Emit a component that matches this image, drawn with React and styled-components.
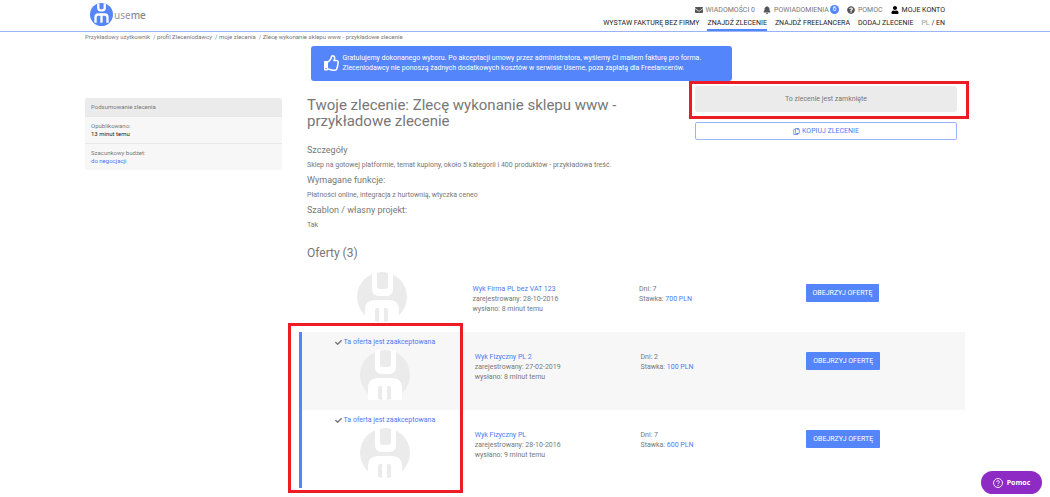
import React from 'react';
import styled, { createGlobalStyle } from 'styled-components';
import {
  FaEnvelope,
  FaBell,
  FaQuestionCircle,
  FaUser,
  FaRegCopy,
  FaCheck,
  FaRegThumbsUp,
} from 'react-icons/fa';

const blue = '#5585fb';
const linkBlue = '#4d79f6';
const grey = '#777';

const GlobalStyle = createGlobalStyle`
  * {
    box-sizing: border-box;
  }

  body {
    margin: 0;
    background: #fff;
    color: ${grey};
    font-family: Roboto, sans-serif;
    font-size: 7px;
    line-height: 10px;
  }

  h1, h2, h3, p, ul, ol, dl, dd {
    margin: 0;
    padding: 0;
    font-weight: 400;
  }

  a {
    color: inherit;
    text-decoration: none;
  }

  button {
    font-family: inherit;
    cursor: pointer;
  }
`;

const Container = styled.div`
  max-width: 880px;
  margin: 0 auto;
`;

const Header = styled.header`
  border-bottom: 1px solid #9ab4f8;
`;

const HeaderInner = styled(Container)`
  display: flex;
  justify-content: space-between;
  height: 31px;
  padding: 0 20px 0 5px;
`;

const Brand = styled.a`
  display: flex;
  align-items: center;
  gap: 1px;
  height: 29px;
  color: #999;
  font-family: 'Noto Sans', sans-serif;
  font-size: 10px;

  b {
    font-weight: 500;
    color: #888;
  }
`;

const Navs = styled.div`
  display: flex;
  flex-direction: column;
  justify-content: space-between;
  align-items: flex-end;
  padding-top: 4px;
`;

const Nav = styled.nav`
  display: flex;
  gap: 8px;
`;

const NavLink = styled.a`
  display: flex;
  align-items: center;
  gap: 3px;
  height: 11px;
  color: ${(props) => (props.$dark ? '#222' : grey)};
  text-transform: uppercase;

  svg {
    width: 8px;
    height: 8px;
    color: ${(props) => (props.$dark ? '#000' : '#555')};
  }
`;

const MenuLink = styled.a`
  height: 13px;
  color: #222;
  text-transform: uppercase;
  border-bottom: 2px solid ${(props) => (props.$active ? blue : 'transparent')};
`;

const Languages = styled.div`
  color: #222;

  a:first-child {
    color: #999;
  }
`;

const Badge = styled.span`
  width: 9px;
  height: 9px;
  margin-left: -2px;
  border-radius: 50%;
  background: ${blue};
  color: #fff;
  line-height: 9px;
  text-align: center;
`;

const Breadcrumbs = styled.nav`
  display: flex;
  gap: 3px;
  font-size: 6px;
`;

const AlertArea = styled.div`
  padding: 4px 8px 0 0;
`;

const Alert = styled.div`
  display: flex;
  align-items: center;
  gap: 3px;
  width: 421px;
  max-width: 100%;
  margin: 0 auto;
  padding: 7px 13px 8px;
  border-radius: 3px;
  background: ${blue};
  color: #fff;

  svg {
    flex: none;
    width: 16px;
    height: 16px;
  }
`;

const Layout = styled.div`
  display: grid;
  grid-template-columns: 197px 1fr;
  gap: 17px;
  padding-bottom: 8px;
`;

const Summary = styled.aside`
  align-self: start;
  margin-top: 17px;
  border-radius: 3px;
  background: #f7f7f7;
  font-size: 6px;
  line-height: 8px;
`;

const SummaryTitle = styled.h2`
  padding: 5px 6px;
  border-radius: 3px 3px 0 0;
  background: #ebebeb;
  font-size: 6px;
`;

const SummaryItem = styled.div`
  padding: 5px 6px;
  border-top: 1px solid #e8e8e8;
`;

const SummaryValue = styled.dd`
  color: ${(props) => (props.$link ? linkBlue : '#222')};
`;

const Intro = styled.div`
  display: flex;
  align-items: flex-start;
  justify-content: space-between;
  padding: 0 8px;
`;

const Details = styled.section`
  width: 320px;
  padding-top: 16px;
`;

const Title = styled.h1`
  margin-bottom: 15px;
  font-size: 15px;
  line-height: 16px;
`;

const Subtitle = styled.h3`
  font-size: 9px;
  line-height: 12px;
`;

const Text = styled.p`
  padding: 4px 0;
`;

const Actions = styled.div`
  display: flex;
  flex-direction: column;
  gap: 10px;
  width: 262px;
  padding-top: 5px;
`;

const Marked = styled.div`
  position: relative;
`;

const Mark = styled.div`
  position: absolute;
  border: 3px solid #ed1c24;
  pointer-events: none;
`;

const StatusMark = styled(Mark)`
  inset: -5px -12px -7px -6px;
`;

const OffersMark = styled(Mark)`
  inset: -9px auto -5px -11px;
  width: 175px;
`;

const Closed = styled.div`
  padding: 7px;
  border-radius: 3px;
  background: #ebebeb;
  line-height: 12px;
  text-align: center;
`;

const CopyButton = styled.button`
  display: flex;
  align-items: center;
  justify-content: center;
  gap: 2px;
  height: 18px;
  padding: 0;
  border: 1px solid #9ab4f8;
  border-radius: 2px;
  background: #fff;
  color: ${linkBlue};
  font-size: 7px;
  text-transform: uppercase;
`;

const OffersTitle = styled.h2`
  padding: 11px 8px 3px;
  font-size: 12px;
  line-height: 16px;
`;

const Offer = styled.article`
  display: grid;
  grid-template-columns: repeat(4, 1fr);
  height: ${(props) => (props.$accepted ? '78px' : '68px')};
  border-left: ${(props) => (props.$accepted ? `3px solid ${blue}` : 'none')};
  background: ${(props) => (props.$shaded ? '#f7f7f7' : 'transparent')};
`;

const OfferPhoto = styled.div`
  display: flex;
  flex-direction: column;
  align-items: center;
  justify-content: flex-end;
  gap: 3px;
  padding-bottom: 10px;
`;

const Accepted = styled.span`
  display: flex;
  align-items: center;
  gap: 2px;
  color: ${linkBlue};

  svg {
    width: 7px;
    height: 7px;
    color: ${grey};
  }
`;

const OfferCell = styled.div`
  padding: 20px 7px 0;
`;

const Link = styled.a`
  color: ${linkBlue};
`;

const OfferButton = styled.button`
  height: 18px;
  padding: 0 7px;
  border: 0;
  border-radius: 1px;
  background: ${blue};
  color: #fff;
  font-size: 7px;
  text-transform: uppercase;
`;

const HelpButton = styled.button`
  position: fixed;
  right: 8px;
  bottom: 3px;
  display: flex;
  align-items: center;
  justify-content: center;
  gap: 4px;
  width: 61px;
  height: 23px;
  padding: 0;
  border: 0;
  border-radius: 12px;
  background: #8e2bc4;
  color: #fff;
  font-family: 'Open Sans', sans-serif;
  font-size: 7px;
  font-weight: 700;
`;

const offers = [
  { name: 'Wyk Firma PL bez VAT 123', registered: '28-10-2016', sent: '8 minut temu', days: 7, rate: '700 PLN' },
  { name: 'Wyk Fizyczny PL 2', registered: '27-02-2019', sent: '8 minut temu', days: 2, rate: '100 PLN', accepted: true, shaded: true },
  { name: 'Wyk Fizyczny PL', registered: '28-10-2016', sent: '9 minut temu', days: 7, rate: '600 PLN', accepted: true },
];

const Logo = () => (
  <svg width="23" height="23" viewBox="0 0 50 50" aria-hidden="true">
    <circle cx="25" cy="25" r="25" fill={blue} />
    <g fill="none" stroke="#fff" strokeWidth="5">
      <path d="M18 1V11Q18 16 23 16H27Q32 16 32 11V1" />
      <path d="M12 43V31Q12 25 18 25H32Q38 25 38 31V43M25 25V43" />
    </g>
  </svg>
);

const Avatar = () => (
  <svg width="50" height="50" viewBox="0 0 50 50" aria-hidden="true">
    <circle cx="25" cy="25" r="25" fill="#ebebeb" />
    <path d="M15 0V17Q15 24 22 24H29Q36 24 36 17V0Z" fill="#fff" />
    <path d="M20 1V14Q20 17 23 17H28Q31 17 31 14V1Q25 -1 20 1Z" fill="#ebebeb" />
    <path d="M8 50V38Q8 28 18 28H32Q42 28 42 38V50Z" fill="#fff" />
    <path d="M18 49V38Q18 36 20 36H22V50ZM27 50V36H29Q31 36 31 38V49Z" fill="#ebebeb" />
  </svg>
);

const HelpIcon = () => (
  <svg width="10" height="10" viewBox="0 0 20 20" fill="none" stroke="#fff" strokeWidth="1.8">
    <circle cx="10" cy="10" r="9" />
    <path d="M7.3 8a2.7 2.7 0 1 1 4 2.4c-.9.5-1.3.9-1.3 1.9" />
    <path d="M10 13.8v1.8" />
  </svg>
);

const OfferRow = ({ offer }) => (
  <Offer $accepted={offer.accepted} $shaded={offer.shaded}>
    <OfferPhoto>
      {offer.accepted && (
        <Accepted>
          <FaCheck />
          Ta oferta jest zaakceptowana
        </Accepted>
      )}
      <Avatar />
    </OfferPhoto>
    <OfferCell>
      <Link href="#">{offer.name}</Link>
      <p>zarejestrowany: {offer.registered}</p>
      <p>wysłano: {offer.sent}</p>
    </OfferCell>
    <OfferCell>
      <p>Dni: {offer.days}</p>
      <p>
        Stawka: <Link as="span">{offer.rate}</Link>
      </p>
    </OfferCell>
    <OfferCell>
      <OfferButton type="button">Obejrzyj ofertę</OfferButton>
    </OfferCell>
  </Offer>
);

const App = () => {
  return (
    <>
      <GlobalStyle />
      <Header>
        <HeaderInner>
          <Brand href="#">
            <Logo />
            <span>
              use<b>me</b>
            </span>
          </Brand>
          <Navs>
            <Nav>
              <NavLink href="#"><FaEnvelope />Wiadomości 0</NavLink>
              <NavLink href="#"><FaBell />Powiadomienia<Badge>6</Badge></NavLink>
              <NavLink href="#"><FaQuestionCircle />Pomoc</NavLink>
              <NavLink href="#" $dark><FaUser />Moje konto</NavLink>
            </Nav>
            <Nav>
              <MenuLink href="#">Wystaw fakturę bez firmy</MenuLink>
              <MenuLink href="#" $active>Znajdź zlecenie</MenuLink>
              <MenuLink href="#">Znajdź freelancera</MenuLink>
              <MenuLink href="#">Dodaj zlecenie</MenuLink>
              <Languages>
                <a href="#">PL</a> / <a href="#">EN</a>
              </Languages>
            </Nav>
          </Navs>
        </HeaderInner>
      </Header>

      <Container>
        <Breadcrumbs>
          <a href="#">Przykładowy użytkownik</a>
          <a href="#">/ profil Zleceniodawcy</a>
          <a href="#">/ moje zlecenia</a>
          <span>/ Zlecę wykonanie sklepu www - przykładowe zlecenie</span>
        </Breadcrumbs>

        <AlertArea>
          <Alert>
            <FaRegThumbsUp />
            <div>
              <p>Gratulujemy dokonanego wyboru. Po akceptacji umowy przez administratora, wyślemy Ci mailem fakturę pro forma.</p>
              <p>Zleceniodawcy nie ponoszą żadnych dodatkowych kosztów w serwisie Useme, poza zapłatą dla Freelancerów.</p>
            </div>
          </Alert>
        </AlertArea>

        <Layout>
          <Summary>
            <SummaryTitle>Podsumowanie zlecenia</SummaryTitle>
            <dl>
              <SummaryItem>
                <dt>Opublikowano:</dt>
                <SummaryValue>13 minut temu</SummaryValue>
              </SummaryItem>
              <SummaryItem>
                <dt>Szacunkowy budżet:</dt>
                <SummaryValue $link>do negocjacji</SummaryValue>
              </SummaryItem>
            </dl>
          </Summary>

          <main>
            <Intro>
              <Details>
                <Title>Twoje zlecenie: Zlecę wykonanie sklepu www - przykładowe zlecenie</Title>
                <Subtitle>Szczegóły</Subtitle>
                <Text>Sklep na gotowej platformie, temat kupiony, około 5 kategorii i 400 produktów - przykładowa treść.</Text>
                <Subtitle>Wymagane funkcje:</Subtitle>
                <Text>Płatności online, integracja z hurtownią, wtyczka ceneo</Text>
                <Subtitle>Szablon / własny projekt:</Subtitle>
                <Text>Tak</Text>
              </Details>
              <Actions>
                <Marked>
                  <Closed>To zlecenie jest zamknięte</Closed>
                  <StatusMark />
                </Marked>
                <CopyButton type="button">
                  <FaRegCopy />
                  Kopiuj zlecenie
                </CopyButton>
              </Actions>
            </Intro>

            <OffersTitle>Oferty (3)</OffersTitle>
            {offers.filter((offer) => !offer.accepted).map((offer) => (
              <OfferRow key={offer.name} offer={offer} />
            ))}
            <Marked>
              {offers.filter((offer) => offer.accepted).map((offer) => (
                <OfferRow key={offer.name} offer={offer} />
              ))}
              <OffersMark />
            </Marked>
          </main>
        </Layout>
      </Container>

      <HelpButton type="button">
        <HelpIcon />
        Pomoc
      </HelpButton>
    </>
  );
};

export default App;
